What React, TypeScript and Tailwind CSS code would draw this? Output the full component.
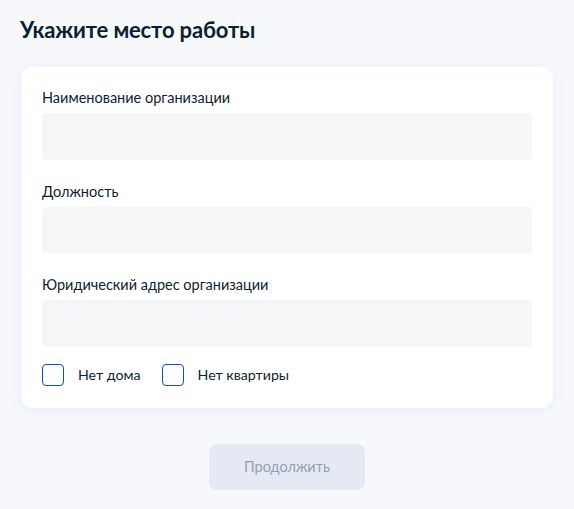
import React from "react";

const fields = [
  "Наименование организации",
  "Должность",
  "Юридический адрес организации",
];

const checks = ["Нет дома", "Нет квартиры"];

const App: React.FC = () => {
  return (
    <div className="min-h-[509px] w-[574px] bg-[#f6f8fc] font-['Lato',sans-serif] text-[#0b1f33]">
      <div className="px-[20px] pt-[16px]">
        <h1 className="text-[22px] font-bold leading-[28px] tracking-[-0.15px]">
          Укажите место работы
        </h1>
        <div className="ml-[1px] mt-[23px] w-[532px] rounded-[12px] bg-white px-[21px] pb-[22px] pt-[21px] shadow-[0_2px_12px_rgba(102,140,200,0.1)]">
          {fields.map((label, i) => (
            <div key={i} className={i > 0 ? "mt-[22px]" : ""}>
              <div className="text-[14.5px] leading-[20px]">{label}</div>
              <div className="mt-[5px] h-[46.5px] w-[490px] rounded-[4px] bg-[#f5f6f8]" />
            </div>
          ))}
          <div className="mt-[17px] flex items-center gap-[21px]">
            {checks.map((c, i) => (
              <label key={i} className="flex items-center gap-[14px] text-[14.2px] leading-[20px]">
                <span className="block h-[22px] w-[22px] rounded-[4px] border-[1.5px] border-[#0d4cd3] bg-white" />
                <span>{c}</span>
              </label>
            ))}
          </div>
        </div>
        <div className="mt-[36px] flex justify-center">
          <button className="h-[46px] w-[156px] rounded-[8px] bg-[#e4e9f3] text-[14.5px] text-[#93a0b6]">
            Продолжить
          </button>
        </div>
      </div>
    </div>
  );
};

export default App;
